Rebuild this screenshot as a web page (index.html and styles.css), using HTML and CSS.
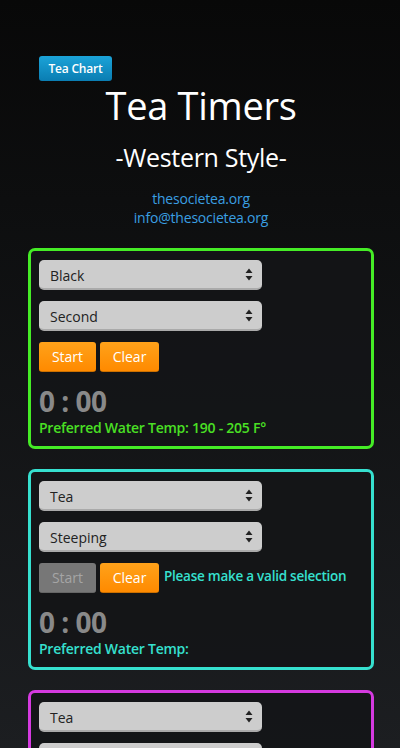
FILE: index.html
```html
<!DOCTYPE html>
<html>
<head>
<meta charset="utf-8">
<link rel="stylesheet" href="styles.css">
</head>
<body>
<div class="page">
  <header class="header">
    <a class="chart-btn">Tea Chart</a>
    <h1 class="title">Tea Timers</h1>
    <h2 class="subtitle">-Western Style-</h2>
    <div class="links">
      <a class="link">thesocietea.org</a>
      <a class="link">info@thesocietea.org</a>
    </div>
  </header>

  <section class="card card-green">
    <div class="select"><span>Black</span><svg class="arrows" width="8" height="13" viewBox="0 0 8 13"><path d="M4 0.5 L7.5 5 H0.5 Z M4 12.5 L7.5 8 H0.5 Z" fill="#222"/></svg></div>
    <div class="select"><span>Second</span><svg class="arrows" width="8" height="13" viewBox="0 0 8 13"><path d="M4 0.5 L7.5 5 H0.5 Z M4 12.5 L7.5 8 H0.5 Z" fill="#222"/></svg></div>
    <div class="actions">
      <button class="btn">Start</button>
      <button class="btn">Clear</button>
    </div>
    <div class="timer">0 : 00</div>
    <div class="temp">Preferred Water Temp: 190 - 205 F°</div>
  </section>

  <section class="card card-cyan">
    <div class="select"><span>Tea</span><svg class="arrows" width="8" height="13" viewBox="0 0 8 13"><path d="M4 0.5 L7.5 5 H0.5 Z M4 12.5 L7.5 8 H0.5 Z" fill="#222"/></svg></div>
    <div class="select"><span>Steeping</span><svg class="arrows" width="8" height="13" viewBox="0 0 8 13"><path d="M4 0.5 L7.5 5 H0.5 Z M4 12.5 L7.5 8 H0.5 Z" fill="#222"/></svg></div>
    <div class="actions">
      <button class="btn btn-disabled">Start</button>
      <button class="btn">Clear</button>
      <span class="msg">Please make a valid selection</span>
    </div>
    <div class="timer">0 : 00</div>
    <div class="temp">Preferred Water Temp:</div>
  </section>

  <section class="card card-magenta">
    <div class="select"><span>Tea</span><svg class="arrows" width="8" height="13" viewBox="0 0 8 13"><path d="M4 0.5 L7.5 5 H0.5 Z M4 12.5 L7.5 8 H0.5 Z" fill="#222"/></svg></div>
    <div class="select"><span>Steeping</span><svg class="arrows" width="8" height="13" viewBox="0 0 8 13"><path d="M4 0.5 L7.5 5 H0.5 Z M4 12.5 L7.5 8 H0.5 Z" fill="#222"/></svg></div>
    <div class="actions">
      <button class="btn btn-disabled">Start</button>
      <button class="btn">Clear</button>
    </div>
    <div class="timer">0 : 00</div>
    <div class="temp">Preferred Water Temp:</div>
  </section>
</div>
</body>
</html>
```

FILE: styles.css
```css
html, body {
  margin: 0;
  padding: 0;
}
body {
  font-family: "Open Sans", "DejaVu Sans", sans-serif;
  background: linear-gradient(to bottom, #080808 0px, #0d0e0f 200px, #1c1e21 748px);
  background-color: #1c1e21;
  min-height: 748px;
  color: #fff;
}
.page {
  padding: 56px 26px 40px 28px;
}
.header {
  display: flex;
  flex-direction: column;
  align-items: center;
}
.chart-btn {
  align-self: flex-start;
  margin-left: 11px;
  height: 25px;
  width: 73px;
  box-sizing: border-box;
  display: flex;
  align-items: center;
  justify-content: center;
  font-size: 12px;
  font-weight: 600;
  color: #fff;
  border-radius: 3px;
  background: linear-gradient(to bottom, #1ba3d8, #0a7db2);
  letter-spacing: -0.2px;
}
.title {
  margin: 0;
  margin-top: -1px;
  font-size: 38px;
  font-weight: 400;
  line-height: 50px;
  letter-spacing: -0.3px;
}
.subtitle {
  margin: 0;
  margin-top: 10px;
  font-size: 25px;
  font-weight: 400;
  line-height: 34px;
  letter-spacing: -0.3px;
}
.links {
  margin-top: 15px;
  display: flex;
  flex-direction: column;
  align-items: center;
}
.link {
  color: #3a9fe2;
  font-size: 14px;
  line-height: 19px;
  letter-spacing: -0.2px;
}
.card {
  margin-top: 21px;
  border: 3px solid #44ee22;
  border-radius: 7px;
  padding: 9px 8px 8px 8px;
  background: rgba(20, 21, 23, 0.9);
}
.card + .card {
  margin-top: 20px;
}
.card-green { border-color: #45ec26; }
.card-cyan { border-color: #36e0cf; }
.card-magenta { border-color: #d53ae0; }
.select {
  width: 223px;
  height: 30px;
  box-sizing: border-box;
  background: #cdcdcd;
  border-radius: 5px;
  border-bottom: 2px solid #aaa;
  display: flex;
  align-items: center;
  justify-content: space-between;
  padding: 0 9px 0 11px;
  color: #222;
  font-size: 14px;
  margin-bottom: 11px;
}
.select span {
  margin-top: 2px;
}
.arrows {
  display: block;
  margin-top: 1px;
}
.actions {
  display: flex;
  align-items: center;
  gap: 4px;
  margin-top: 0;
}
.btn {
  font-family: "Open Sans", "DejaVu Sans", sans-serif;
  height: 30px;
  border: none;
  border-radius: 3px;
  background: linear-gradient(to bottom, #ffa21a, #ff8a00);
  color: #fff;
  font-size: 14px;
  padding: 0;
  width: 57px;
  border-bottom: 1px solid #cc7000;
}
.btn + .btn {
  width: 59px;
}
.btn-disabled {
  background: #777;
  color: #a5a5a5;
  border-bottom-color: #666;
}
.msg {
  margin-left: 1px;
  font-size: 13.5px;
  font-weight: 600;
  margin-top: -4px;
  letter-spacing: -0.25px;
}
.card-cyan .msg, .card-cyan .temp { color: #36e0cf; }
.card-green .temp { color: #4ae024; }
.card-magenta .temp { color: #d53ae0; }
.timer {
  margin-top: 12px;
  font-size: 28px;
  font-weight: 700;
  color: #898989;
  line-height: 34px;
  letter-spacing: -0.5px;
}
.temp {
  font-size: 14px;
  font-weight: 600;
  line-height: 20px;
  margin-top: 0;
  letter-spacing: -0.25px;
}
```
